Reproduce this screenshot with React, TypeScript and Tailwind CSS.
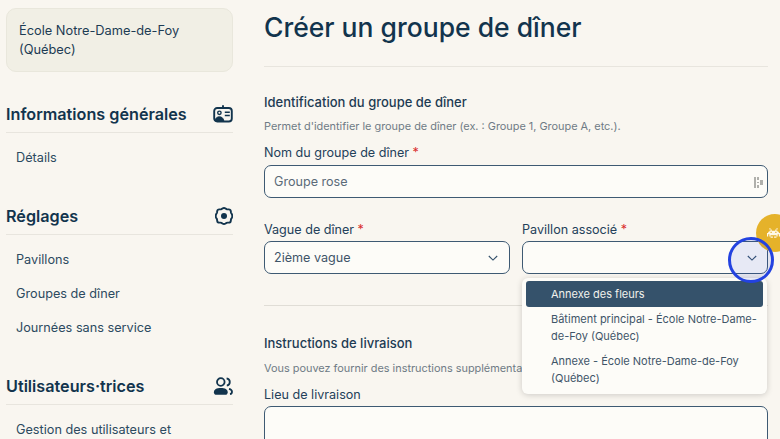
const font = { fontFamily: '"Inter", "Noto Sans", sans-serif' };

function Chevron() {
  return (
    <svg width="12" height="12" viewBox="0 0 12 12" fill="none" stroke="#33506a" strokeWidth="1.1">
      <path d="M1.8 4 6 8.1 10.2 4" />
    </svg>
  );
}

function IdIcon() {
  return (
    <svg width="20" height="18" viewBox="0 0 20 18" fill="none" stroke="#12344d" strokeWidth="1.9">
      <rect x="1.2" y="3" width="17.6" height="13.5" rx="3" />
      <path d="M10 0.2v3" />
      <circle cx="6.4" cy="7.8" r="1.7" strokeWidth="1.4" />
      <path d="M2 16c.4-3 2.200-4.200 4.400-4.200s4 1.200 4.400 4.200z" fill="#12344d" strokeWidth="1" />
      <path d="M11.800 7.200h5M11.800 10.400h5" strokeWidth="1.500" />
    </svg>
  );
}

function GearIcon() {
  return (
    <svg width="18" height="18" viewBox="0 0 18 18" fill="none" stroke="#12344d" strokeWidth="1.9" strokeLinejoin="round">
      <path d="M7.400 1.500q1.600-.9 3.200 0l.9.600q.6.300 1.300.3h1q1.800 0 2 1.800l.1 1q.1.700.5 1.200l.5.900q.8 1.700 0 3.400l-.5.900q-.4.500-.5 1.200l-.1 1q-.2 1.800-2 1.800h-1q-.7 0-1.300.3l-.9.600q-1.600.9-3.200 0l-.9-.6q-.6-.3-1.300-.3h-1q-1.800 0-2-1.800l-.1-1q-.1-.7-.5-1.200l-.5-.9q-.8-1.700 0-3.400l.5-.9q.4-.5.500-1.200l.1-1q.2-1.800 2-1.800h1q.7 0 1.300-.3z" />
      <circle cx="9" cy="9" r="3" fill="#12344d" stroke="none" />
    </svg>
  );
}

function UsersIcon() {
  return (
    <svg width="20" height="19" viewBox="0 0 20 19" fill="none" stroke="#12344d" strokeWidth="1.8">
      <circle cx="7.800" cy="5" r="3.800" />
      <path d="M.9 15.200c0-2.800 2.700-4.200 6.900-4.200s6.900 1.400 6.900 4.200c0 1.600-1 2.600-2.600 2.600H3.500C1.900 17.800.9 16.800.9 15.200z" fill="#12344d" stroke="none" />
      <path d="M13.600 1.300c2 .3 3.200 1.800 3.200 3.700s-1.300 3.300-3 3.600M16 11.800c1.900.5 3 1.500 3 2.900 0 1.300-.7 2.200-2 2.500" />
    </svg>
  );
}

function InvaderIcon() {
  return (
    <svg width="13" height="10" viewBox="0 0 11 8" fill="#fff8e8">
      <path d="M2 0h1v1h1v1h3V1h1V0h1v1H8v1h1v1h1v1h1v3h-1V5H9v2H8v1H6V7h2V6H3v1h2v1H3V7H2V5H1v2H0V4h1V3h1V2h1V1H2zM3 3v1h1V3zm4 0v1h1V3z" />
    </svg>
  );
}

function NavSection({ title, icon, items }: { title: string; icon: React.ReactNode; items: string[] }) {
  return (
    <section className="shrink-0">
      <div className="flex h-[30px] items-center justify-between border-b border-[#e8e5de] pb-[7px]">
        <h2 className="text-[16.2px] leading-[24px] font-semibold text-[#12344d]">{title}</h2>
        {icon}
      </div>
      <ul className="mt-[8px] flex flex-col">
        {items.map((item) => (
          <li key={item} className="h-[34px] pl-[10px] text-[12.7px] leading-[34px] whitespace-nowrap text-[#2c4a60]">
            {item}
          </li>
        ))}
      </ul>
    </section>
  );
}

function Label({ text, required }: { text: string; required?: boolean }) {
  return (
    <div className="text-[12.6px] leading-[18px] text-[#24415a]">
      {text}
      {required && <span className="text-[#d92d2d]"> *</span>}
    </div>
  );
}

export default function App() {
  return (
    <div style={font} className="flex h-[439px] w-[780px] gap-[31px] overflow-hidden bg-[#f9f6f0] pl-[6px]">
      <aside className="flex w-[227px] shrink-0 flex-col pt-[8px]">
        <div className="h-[64px] shrink-0 rounded-[10px] border border-[#e9e7dc] bg-[#f1efe5] px-[12px] pt-[13px] text-[12.8px] leading-[18.5px] text-[#1d3b53]">
          École Notre-Dame-de-Foy (Québec)
        </div>
        <div className="mt-[31px] flex shrink-0 flex-col gap-[30px]">
          <NavSection title="Informations générales" icon={<IdIcon />} items={["Détails"]} />
          <NavSection
            title="Réglages"
            icon={<GearIcon />}
            items={["Pavillons", "Groupes de dîner", "Journées sans service"]}
          />
          <NavSection title="Utilisateurs·trices" icon={<UsersIcon />} items={["Gestion des utilisateurs et"]} />
        </div>
      </aside>
      <main className="w-[504px] shrink-0">
        <h1 className="pt-[9px] text-[26.5px] leading-[36px] font-medium text-[#12344d]">Créer un groupe de dîner</h1>
        <hr className="mt-[21px] border-[#e8e5de]" />
        <h3 className="mt-[26px] text-[13px] leading-[18px] font-medium text-[#1d3b53]">
          Identification du groupe de dîner
        </h3>
        <p className="mt-[7px] text-[10.9px] leading-[16px] text-[#6f7b85]">
          Permet d'identifier le groupe de dîner (ex. : Groupe 1, Groupe A, etc.).
        </p>
        <div className="mt-[10px] flex flex-col gap-[3px]">
          <Label text="Nom du groupe de dîner" required />
          <div className="flex h-[33px] items-center justify-between rounded-[7px] border border-[#3e5a73] bg-[#fdfcf8] pt-[1px] pr-[4px] pl-[9px] text-[12.6px] text-[#5b6b78]">
            Groupe rose
            <svg width="9" height="11" viewBox="0 0 9 11" fill="#b0b0ac">
              <path d="M0 0h2v11H0zM3 0h2v3H3zM3 5h2v1H3zM3 8h2v3H3zM6 3h3v5H6z" />
            </svg>
          </div>
        </div>
        <div className="mt-[23px] grid grid-cols-2 gap-[12px]">
          <div className="flex flex-col gap-[2px]">
            <Label text="Vague de dîner" required />
            <div className="flex h-[33px] items-center justify-between rounded-[7px] border border-[#3e5a73] bg-[#fdfcf8] pt-[1px] pr-[10px] pl-[9px] text-[12.6px] text-[#3f5568]">
              2ième vague
              <Chevron />
            </div>
          </div>
          <div className="relative flex flex-col gap-[2px]">
            <Label text="Pavillon associé" required />
            <div className="flex h-[33px] items-center justify-end rounded-[7px] border border-[#3e5a73] bg-[#fdfcf8] pr-[9px]">
              <Chevron />
            </div>
            <div className="absolute top-[57px] left-0 z-10 w-[245px] rounded-[6px] bg-[#fdfcf8] px-[4px] py-[3px] text-[11px] leading-[16.5px] text-[#3f5568] shadow-[0_1px_6px_rgba(0,0,0,0.18)]">
              <div className="flex h-[25.5px] items-center rounded-[3px] bg-[#35526b] pl-[25px] text-[#f1f1ec]">
                Annexe des fleurs
              </div>
              <div className="py-[4.5px] pl-[25px]">Bâtiment principal - École Notre-Dame-de-Foy (Québec)</div>
              <div className="py-[4.5px] pl-[25px]">Annexe - École Notre-Dame-de-Foy (Québec)</div>
            </div>
            <div className="absolute top-[-7px] left-[234px] z-10 flex h-[38px] w-[38px] items-center rounded-full bg-[#e5b22a] pl-[11px]">
              <InvaderIcon />
            </div>
            <div className="absolute top-[16px] left-[206px] z-20 h-[46px] w-[46px] rounded-full border-[3px] border-[#2342e0] bg-[#2342e0]/10" />
          </div>
        </div>
        <hr className="mt-[31px] border-[#e0ddd6]" />
        <h3 className="mt-[28px] text-[13px] leading-[18px] font-medium text-[#1d3b53]">Instructions de livraison</h3>
        <p className="mt-[8px] text-[10.9px] leading-[16px] whitespace-nowrap text-[#6f7b85]">
          Vous pouvez fournir des instructions supplémentaires
        </p>
        <div className="mt-[10px] flex flex-col gap-[2px]">
          <Label text="Lieu de livraison" />
          <div className="h-[60px] rounded-[7px] border border-[#3e5a73] bg-[#fdfcf8]" />
        </div>
      </main>
    </div>
  );
}
